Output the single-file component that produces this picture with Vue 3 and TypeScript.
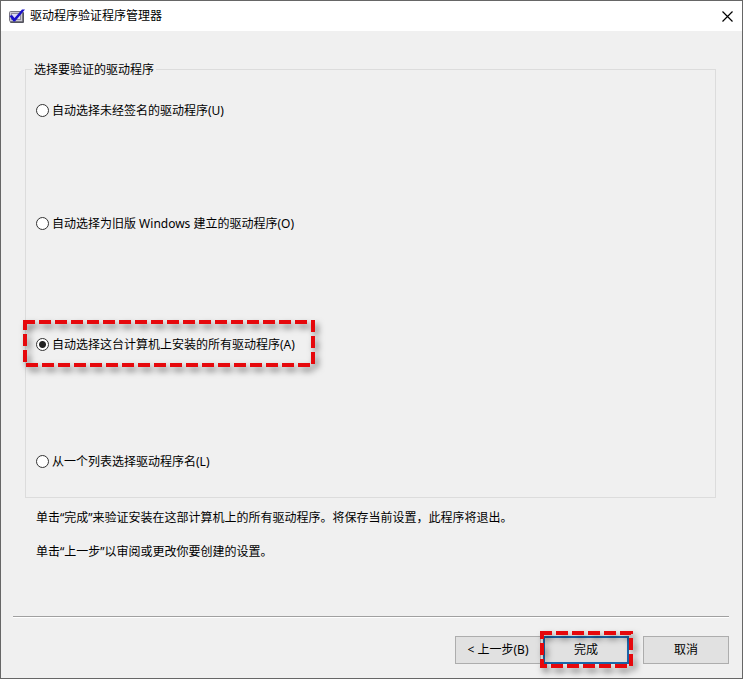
<script setup lang="ts">
import { ref } from 'vue'

interface DriverOption {
  id: string
  label: string
}

const options: DriverOption[] = [
  { id: 'unsigned', label: '自动选择未经签名的驱动程序(U)' },
  { id: 'legacy', label: '自动选择为旧版 Windows 建立的驱动程序(O)' },
  { id: 'all', label: '自动选择这台计算机上安装的所有驱动程序(A)' },
  { id: 'list', label: '从一个列表选择驱动程序名(L)' },
]

const selected = ref('all')
</script>

<template>
  <main class="window">
    <header class="titlebar">
      <svg class="app-icon" width="18" height="16" viewBox="0 0 18 16" aria-hidden="true">
        <rect x="2" y="4" width="14" height="11" rx="1" fill="#55555f" />
        <rect x="1.500" y="3.500" width="13" height="10" rx="1" fill="#c9c7d2" stroke="#77757f" />
        <rect x="3.500" y="5.500" width="9" height="6" fill="#dcdaf4" stroke="#8e8b9c" />
        <path d="M1.500 8 L4 7 L6.500 10 L14 1.500 L17 1.500 L7 13.500 L5.500 13.500 Z" fill="#1a10c8" />
      </svg>
      <h1 class="title">驱动程序验证程序管理器</h1>
      <button class="close" type="button" aria-label="关闭">
        <svg width="11" height="11" viewBox="0 0 11 11" aria-hidden="true">
          <path d="M0.500 0.500 L10.500 10.500 M10.500 0.500 L0.500 10.500" stroke="#000" stroke-width="1.200" />
        </svg>
      </button>
    </header>

    <form class="page" @submit.prevent>
      <fieldset class="group">
        <legend>选择要验证的驱动程序</legend>
        <div class="options">
          <div v-for="option in options" :key="option.id" class="option">
            <input :id="option.id" v-model="selected" type="radio" name="drivers" :value="option.id" />
            <label :for="option.id">{{ option.label }}</label>
            <svg v-if="option.id === 'all'" class="callout callout-option" width="292" height="47" aria-hidden="true">
              <rect x="2" y="2" width="288" height="43" />
            </svg>
          </div>
        </div>
      </fieldset>

      <div class="notes">
        <p>单击“完成”来验证安装在这部计算机上的所有驱动程序。将保存当前设置，此程序将退出。</p>
        <p>单击“上一步”以审阅或更改你要创建的设置。</p>
      </div>

      <footer class="footer">
        <button class="btn" type="button">&lt; 上一步(B)</button>
        <div class="finish">
          <button class="btn primary" type="submit">完成</button>
          <svg class="callout callout-finish" width="93" height="37" aria-hidden="true">
            <rect x="2" y="2" width="89" height="33" />
          </svg>
        </div>
        <button class="btn" type="button">取消</button>
      </footer>
    </form>
  </main>
</template>

<style>
body {
  margin: 0;
}
</style>

<style scoped>
.window {
  box-sizing: border-box;
  min-height: 100vh;
  display: flex;
  flex-direction: column;
  border: 1px solid #666;
  background: #f0f0f0;
  color: #000;
  font: 12px/16px "Noto Sans", "Noto Sans CJK SC", sans-serif;
}

.titlebar {
  display: flex;
  align-items: center;
  height: 30px;
  padding-left: 7px;
  background: #fff;
}

.app-icon {
  flex: none;
}

.title {
  flex: 1;
  margin: 0 0 0 4px;
  font-size: 12px;
  font-weight: 400;
}

.close {
  display: flex;
  align-items: center;
  justify-content: center;
  width: 30px;
  height: 30px;
  padding: 0;
  border: 0;
  background: none;
}

.page {
  flex: 1;
  display: flex;
  flex-direction: column;
}

.group {
  min-width: 0;
  margin: 29px 26px 0 24px;
  padding: 0 10px 28px;
  border: 1px solid #dcdcdc;
}

.group legend {
  margin-left: -4px;
  padding: 2px 2px 0;
}

.options {
  display: grid;
  grid-template-rows: 113px 121px 117px 16px;
  padding-top: 24px;
}

.option {
  position: relative;
  display: flex;
  align-items: center;
  gap: 3px;
  height: 16px;
}

.option input {
  appearance: none;
  flex: none;
  box-sizing: border-box;
  width: 13px;
  height: 13px;
  margin: 0;
  border: 1px solid #333;
  border-radius: 50%;
  background: #fff;
}

.option input:checked {
  background: radial-gradient(circle, #222 0 3px, #fff 4px);
}

.option label {
  padding-top: 2px;
}

.callout {
  position: absolute;
  overflow: visible;
  pointer-events: none;
  filter: drop-shadow(3px 4px 3px rgba(0, 0, 0, 0.5));
}

.callout rect {
  fill: none;
  stroke: #e6080c;
  stroke-width: 4;
  stroke-dasharray: 12 4;
  stroke-dashoffset: 2;
}

.callout-option {
  top: -16px;
  left: -13px;
}

.callout-finish {
  top: -5px;
  left: -3px;
}

.notes {
  display: flex;
  flex-direction: column;
  gap: 18px;
  padding: 12px 35px;
}

.notes p {
  margin: 0;
}

.footer {
  display: flex;
  justify-content: flex-end;
  margin: auto 13px 0 12px;
  padding: 19px 0 14px;
  border-top: 1px solid #a0a0a0;
  box-shadow: inset 0 1px #fff;
}

.btn {
  box-sizing: border-box;
  width: 86px;
  height: 28px;
  padding: 0;
  border: 1px solid #adadad;
  background: #e1e1e1;
  color: #000;
  font: inherit;
}

.finish {
  position: relative;
  margin: 0 14px 0 2px;
}

.finish .btn {
  display: block;
}

.primary {
  border: 2px solid #1c68ac;
}
</style>
